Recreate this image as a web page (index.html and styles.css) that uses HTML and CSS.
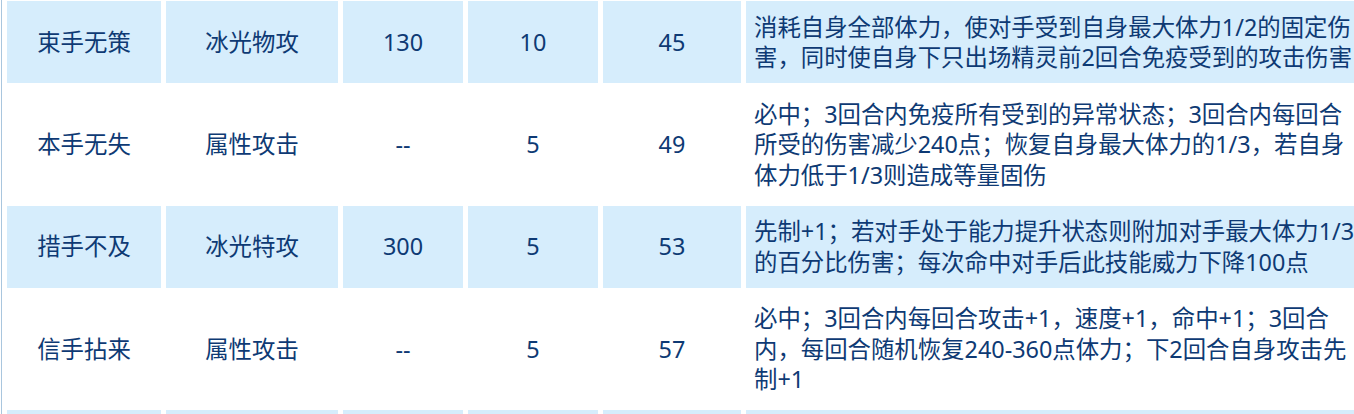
FILE: index.html
```html
<!DOCTYPE html>
<html lang="zh-CN">
<head>
<meta charset="utf-8">
<title>技能表</title>
<link rel="stylesheet" href="styles.css">
</head>
<body>
<div class="frame">
  <table class="skills">
    <tbody>
      <tr class="alt">
        <td class="c-name">束手无策</td>
        <td class="c-type">冰光物攻</td>
        <td class="c-power">130</td>
        <td class="c-pp">10</td>
        <td class="c-lv">45</td>
        <td class="c-desc">消耗自身全部体力，使对手受到自身最大体力1/2的固定伤<br>害，同时使自身下只出场精灵前2回合免疫受到的攻击伤害</td>
      </tr>
      <tr>
        <td class="c-name">本手无失</td>
        <td class="c-type">属性攻击</td>
        <td class="c-power">--</td>
        <td class="c-pp">5</td>
        <td class="c-lv">49</td>
        <td class="c-desc">必中；3回合内免疫所有受到的异常状态；3回合内每回合<br>所受的伤害减少240点；恢复自身最大体力的1/3，若自身<br>体力低于1/3则造成等量固伤</td>
      </tr>
      <tr class="alt">
        <td class="c-name">措手不及</td>
        <td class="c-type">冰光特攻</td>
        <td class="c-power">300</td>
        <td class="c-pp">5</td>
        <td class="c-lv">53</td>
        <td class="c-desc">先制+1；若对手处于能力提升状态则附加对手最大体力1/3<br>的百分比伤害；每次命中对手后此技能威力下降100点</td>
      </tr>
      <tr>
        <td class="c-name">信手拈来</td>
        <td class="c-type">属性攻击</td>
        <td class="c-power">--</td>
        <td class="c-pp">5</td>
        <td class="c-lv">57</td>
        <td class="c-desc">必中；3回合内每回合攻击+1，速度+1，命中+1；3回合<br>内，每回合随机恢复240-360点体力；下2回合自身攻击先<br>制+1</td>
      </tr>
      <tr class="alt">
        <td class="c-name">&nbsp;</td>
        <td class="c-type">&nbsp;</td>
        <td class="c-power">&nbsp;</td>
        <td class="c-pp">&nbsp;</td>
        <td class="c-lv">&nbsp;</td>
        <td class="c-desc">&nbsp;</td>
      </tr>
    </tbody>
  </table>
</div>
</body>
</html>
```

FILE: styles.css
```css
html, body {
  margin: 0;
  padding: 0;
  overflow: hidden;
  background: #ffffff;
}

body {
  font-family: "Noto Sans", "Noto Sans CJK SC", sans-serif;
  color: #0e3a74;
}

.frame {
  margin-left: 1px;
  border-left: 1px solid #a9c6de;
  height: 420px;
  width: 1500px;
}

.skills {
  border-collapse: separate;
  border-spacing: 5px;
  margin-top: -4px;
  font-size: 23.4px;
  line-height: 30.5px;
}

.skills td {
  padding: 10.5px 0;
  text-align: center;
  vertical-align: middle;
  white-space: nowrap;
  box-sizing: border-box;
}

.skills tr.alt td {
  background: #d6edfc;
}

.c-name { width: 154px; }
.c-type { width: 172px; }
.c-power { width: 120px; }
.c-pp { width: 130px; }
.c-lv { width: 138px; }

.skills td.c-desc {
  text-align: left;
  padding-left: 8px;
  padding-right: 12px;
  width: 680px;
}
```
